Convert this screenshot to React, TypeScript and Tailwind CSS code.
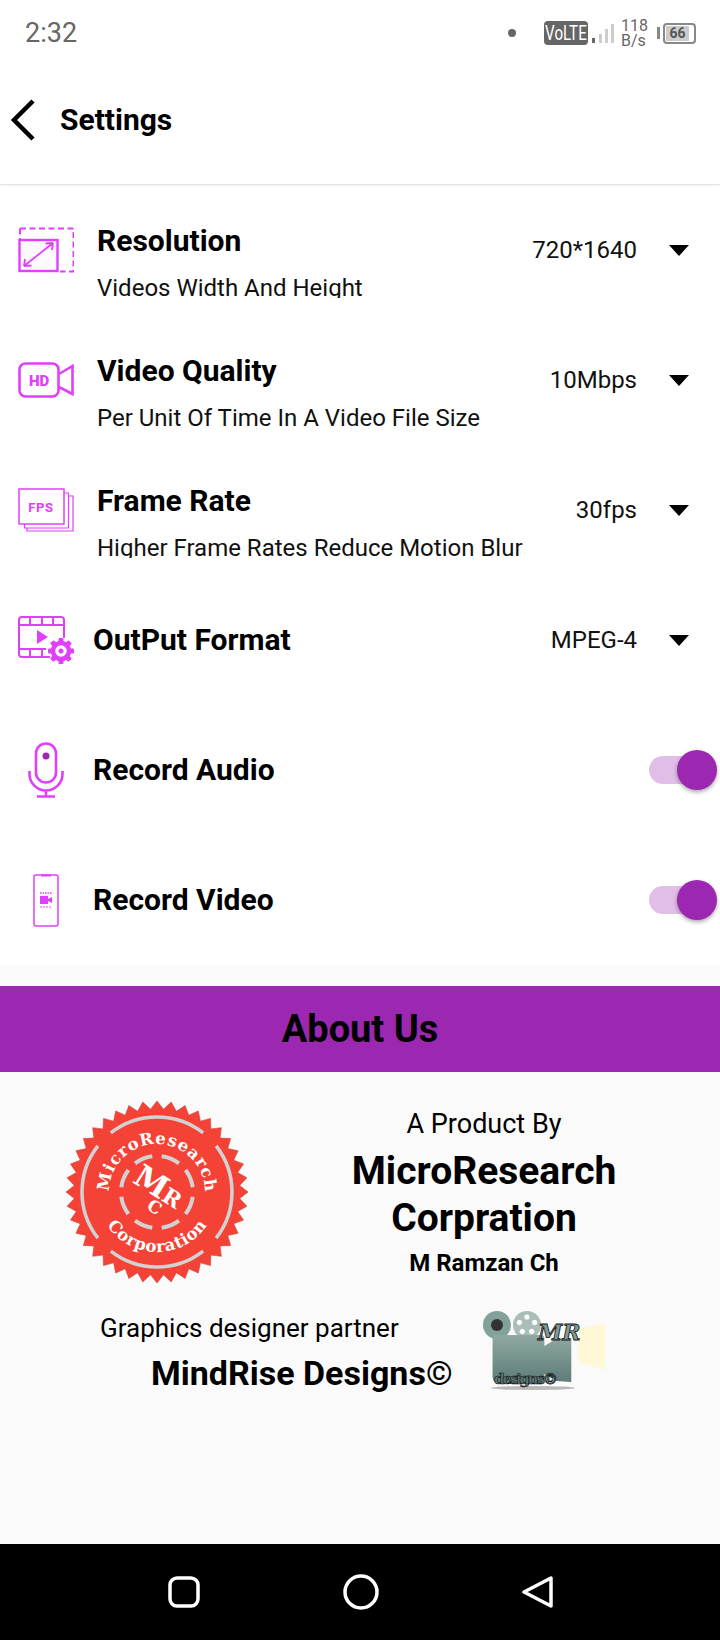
import type { ReactNode } from 'react';

const pink = '#e040fb';

function ResolutionIcon() {
  return (
    <svg width="56" height="46" viewBox="0 0 56 46" fill="none" stroke={pink} strokeWidth="2">
      <path d="M2 1.5h53.5v43H42" strokeDasharray="6 3.5" />
      <path d="M2 1.5v12" strokeDasharray="6 3.5" />
      <rect x="1.5" y="13" width="38" height="31" strokeWidth="2.4" fill="#fdfaff" />
      <path d="M6 39 35 16M6 39l1-7M6 39l7.5-.5M35 16l-7.5.5M35 16l-1 7" strokeWidth="1.8" />
    </svg>
  );
}

function HdIcon() {
  return (
    <svg width="56" height="36" viewBox="0 0 56 36" fill="none" stroke={pink} strokeWidth="2.6">
      <rect x="1.5" y="1.5" width="39" height="33" rx="6" />
      <path d="M41 12 54.5 4v28L41 25" />
      <text x="21" y="24" textAnchor="middle" fontFamily="Roboto" fontWeight="900" fontSize="15" fill={pink} stroke="none">HD</text>
    </svg>
  );
}

function FpsIcon() {
  return (
    <svg width="56" height="44" viewBox="0 0 56 44" fill="none" stroke={pink} strokeWidth="1.2">
      <path d="M46 5h4.5v35H6.500v-4" />
      <path d="M50.500 8h4.500v35H9v-3" />
      <rect x="1" y="1" width="45" height="35" strokeWidth="1.5" fill="#fff" />
      <text x="23" y="24" textAnchor="middle" fontFamily="Roboto" fontWeight="700" fontSize="13" letterSpacing="0.6" fill={pink} stroke="none">FPS</text>
    </svg>
  );
}

function FormatIcon() {
  const teeth = [0, 45, 90, 135, 180, 225, 270, 315];
  return (
    <svg width="56" height="48" viewBox="0 0 56 48" fill="none" stroke={pink} strokeWidth="2">
      <path d="M32 41H4a3 3 0 0 1-3-3V4a3 3 0 0 1 3-3h39a3 3 0 0 1 3 3v18" />
      <path d="M1 9h45M1 33h27M12 1v8M24 1v8M35 1v8M12 33v8M24 33v8" />
      <path d="M19 14l11 7-11 7z" fill={pink} stroke="none" />
      <circle cx="43" cy="35" r="8" strokeWidth="4.500" />
      <circle cx="43" cy="35" r="2.500" fill={pink} stroke="none" />
      {teeth.map(a => (
        <rect key={a} x="40.500" y="22" width="5" height="5" rx="1" fill={pink} stroke="none" transform={`rotate(${a} 43 35)`} />
      ))}
    </svg>
  );
}

function MicIcon() {
  return (
    <svg width="36" height="56" viewBox="0 0 36 56" fill="none" stroke={pink} strokeWidth="2.600">
      <rect x="8" y="1.500" width="20" height="39" rx="10" />
      <path d="M1.500 29v3a16.500 16.500 0 0 0 33 0v-3M18 48.500v6M9 54.500h18" />
      <circle cx="18" cy="14" r="3.500" fill="#9c27b0" stroke="none" />
    </svg>
  );
}

function PhoneIcon() {
  return (
    <svg width="26" height="53" viewBox="0 0 26 53" fill="none" stroke={pink} strokeWidth="1.500">
      <rect x="1" y="1" width="24" height="51" rx="2" />
      <path d="M8 1.500h10" strokeWidth="2" />
      <path d="M7 19h12" strokeWidth="1.500" strokeDasharray="1.500 1" />
      <path d="M7 22h8v8H7zM15 25l4-2v6l-4-2z" fill={pink} stroke="none" />
      <path d="M7 33h12" strokeWidth="1" strokeDasharray="2 1" />
    </svg>
  );
}

function Arrow() {
  return (
    <svg width="20" height="11" viewBox="0 0 20 11" className="ml-[32px]">
      <path d="M0 0h20L10 11z" fill="#000" />
    </svg>
  );
}

function Toggle() {
  return (
    <div className="relative ml-auto mr-[23px] h-[28px] w-[48px] rounded-full bg-[#e1bee7]">
      <div className="absolute right-[-20px] top-[-6px] h-[40px] w-[40px] rounded-full bg-[#9c27b0] shadow-[0_2px_4px_rgba(0,0,0,0.35)]" />
    </div>
  );
}

function DetailRow({ icon, title, sub, value }: { icon: ReactNode; title: string; sub: string; value: string }) {
  return (
    <div className="flex h-[130px] items-center pl-[18px] pr-[31px]">
      <div className="flex w-[56px] justify-center">{icon}</div>
      <div className="ml-[23px] h-[96px] overflow-hidden pt-[21px]">
        <div className="text-[30px] font-bold leading-[36px] text-black">{title}</div>
        <div className="mt-[14px] text-[24px] leading-[30px] text-[#111] whitespace-nowrap">{sub}</div>
      </div>
      <div className="ml-auto text-[24px] leading-[30px] text-[#111]">{value}</div>
      <Arrow />
    </div>
  );
}

function PlainRow({ icon, title, children }: { icon: ReactNode; title: string; children: ReactNode }) {
  return (
    <div className="flex h-[130px] items-center pl-[18px]">
      <div className="flex w-[56px] justify-center">{icon}</div>
      <div className="ml-[19px] text-[30px] font-bold leading-[36px] text-black">{title}</div>
      {children}
    </div>
  );
}

function Seal() {
  const n = 40;
  const pts: string[] = [];
  for (let i = 0; i < n * 2; i++) {
    const r = i % 2 === 0 ? 91 : 83;
    const a = (i * Math.PI) / n - Math.PI / 2;
    pts.push(`${(92 + r * Math.cos(a)).toFixed(1)},${(92 + r * Math.sin(a)).toFixed(1)}`);
  }
  const arc = (r: number, from: number, to: number) => {
    const p = (d: number) => {
      const a = ((d - 90) * Math.PI) / 180;
      return `${(92 + r * Math.cos(a)).toFixed(2)} ${(92 + r * Math.sin(a)).toFixed(2)}`;
    };
    return `M${p(from)}A${r} ${r} 0 0 1 ${p(to)}`;
  };
  return (
    <svg width="184" height="184" viewBox="0 0 184 184" fill="none">
      <defs>
        <path id="seal-top" d="M44 92a48 48 0 0 1 96 0" />
        <path id="seal-bottom" d="M32 92a60 60 0 0 0 120 0" />
      </defs>
      <polygon points={pts.join(' ')} fill="#f44336" stroke="#c9473c" strokeWidth="0.600" />
      {[0, 90, 180, 270].map(a => (
        <path key={a} d={arc(75, a - 38, a + 38)} stroke="#d2d2d2" strokeWidth="3.500" />
      ))}
      {[0, 45, 90, 135, 180, 225, 270, 315].map(a => (
        <path key={a} d={arc(36, a + 22.500 - 15, a + 22.500 + 15)} stroke="#d2d2d2" strokeWidth="4" />
      ))}
      <g fontFamily="DejaVu Serif" fontWeight="700" fill="#fff" fontSize="16.500">
        <text>
          <textPath href="#seal-top" startOffset="50%" textAnchor="middle" textLength="150">MicroResearch</textPath>
        </text>
        <text>
          <textPath href="#seal-bottom" startOffset="50%" textAnchor="middle" textLength="118">Corporation</textPath>
        </text>
        <g transform="rotate(32 92 92)">
          <text x="82" y="97" textAnchor="middle" fontSize="31">M</text>
          <text x="108" y="97" textAnchor="middle" fontSize="22">R</text>
          <text x="98" y="112" textAnchor="middle" fontSize="17">C</text>
        </g>
      </g>
    </svg>
  );
}

function DesignLogo() {
  return (
    <svg width="126" height="84" viewBox="0 0 126 84" fill="none">
      <defs>
        <linearGradient id="cam" x1="0" y1="0" x2="0" y2="1">
          <stop offset="0" stopColor="#8fa9a3" />
          <stop offset="1" stopColor="#5c7a76" />
        </linearGradient>
      </defs>
      <path d="M99 20 126 14v47l-27-8z" fill="#fff8d6" />
      <circle cx="18" cy="16" r="14" fill="#83a19b" />
      <circle cx="18" cy="16" r="6" fill="#333" />
      <circle cx="48" cy="16" r="14" fill="#a9bdb9" />
      {[0, 72, 144, 216, 288].map(a => (
        <circle key={a} cx="48" cy="8" r="2.600" fill="#fff" transform={`rotate(${a} 48 16)`} />
      ))}
      <path d="M11 36a4 4 0 0 1 4-4h46a4 4 0 0 1 4 4v7l12-7h16v43l-16-1-12-7v5a5 5 0 0 1-5 5H18a7 7 0 0 1-7-7z" fill="url(#cam)" transform="translate(3 -6) scale(0.96 1)" />
      <ellipse cx="54" cy="79" rx="42" ry="2" fill="#777" opacity="0.5" />
      <text x="59" y="31" fontFamily="DejaVu Serif" fontStyle="italic" fontWeight="700" fontSize="22" fill="#7f9a94" stroke="#111" strokeWidth="0.800">MR</text>
      <text x="15" y="75" fontFamily="DejaVu Serif" fontWeight="700" fontSize="15.500" fill="#5c7a76" stroke="#111" strokeWidth="0.600" textLength="64">designs©</text>
    </svg>
  );
}

export default function App() {
  return (
    <div className="flex h-[1640px] w-[720px] flex-col overflow-hidden bg-white font-[Roboto,sans-serif]">
      {/* status bar */}
      <div className="flex h-[56px] items-center pl-[25px] pr-[24px] pt-[10px] text-[#666]">
        <span className="text-[27px] leading-[32px]">2:32</span>
        <span className="ml-auto h-[8px] w-[8px] rounded-full bg-[#666]" />
        <div className="ml-[28px] flex h-[24px] w-[44px] items-center justify-center overflow-hidden rounded-[4px] bg-[#666]">
          <span className="scale-x-[0.72] text-[21px] leading-[24px] text-white">VoLTE</span>
        </div>
        <svg width="24" height="24" viewBox="0 0 24 24" className="ml-[3px]">
          <rect x="1" y="17" width="3" height="5" fill="#666" />
          <rect x="8" y="13" width="3" height="9" fill="#ccc" />
          <rect x="14" y="8" width="3" height="14" fill="#ccc" />
          <rect x="20" y="3" width="3" height="19" fill="#ccc" />
        </svg>
        <div className="ml-[6px] text-[16px] leading-[15px] text-[#666]">
          <div>118</div>
          <div>B/s</div>
        </div>
        <div className="ml-[9px] h-[12px] w-[3px] bg-[#888]" />
        <div className="ml-[3px] flex h-[21px] w-[33px] items-center rounded-[4px] border-2 border-[#888] p-[1px]">
          <div className="flex h-full w-[23px] items-center justify-center rounded-[1px] bg-[#ccc] text-[14px] font-bold leading-none text-[#555]">66</div>
        </div>
      </div>

      {/* toolbar */}
      <div className="flex h-[129px] items-center border-b border-[#e4e4e4] pl-[10px] shadow-[0_1px_2px_rgba(0,0,0,0.06)]">
        <svg width="26" height="42" viewBox="0 0 26 42" fill="none" stroke="#000" strokeWidth="4.500">
          <path d="M23 2 4 21l19 19" />
        </svg>
        <span className="ml-[24px] text-[30px] font-bold leading-[36px] text-black">Settings</span>
      </div>

      <DetailRow icon={<ResolutionIcon />} title="Resolution" sub="Videos Width And Height" value="720*1640" />
      <DetailRow icon={<HdIcon />} title="Video Quality" sub="Per Unit Of Time In A Video File Size" value="10Mbps" />
      <DetailRow icon={<FpsIcon />} title="Frame Rate" sub="Higher Frame Rates Reduce Motion Blur" value="30fps" />
      <PlainRow icon={<FormatIcon />} title="OutPut Format">
        <div className="ml-auto text-[24px] leading-[30px] text-[#111]">MPEG-4</div>
        <div className="mr-[31px]"><Arrow /></div>
      </PlainRow>
      <PlainRow icon={<MicIcon />} title="Record Audio"><Toggle /></PlainRow>
      <PlainRow icon={<PhoneIcon />} title="Record Video"><Toggle /></PlainRow>

      {/* about */}
      <div className="flex flex-1 flex-col bg-[#fafafa] pt-[21px]">
        <div className="flex h-[86px] items-center justify-center bg-[#9c27b0] text-[38px] font-bold leading-[44px] text-black">About Us</div>
        <div className="flex pl-[65px] pt-[28px]">
          <Seal />
          <div className="ml-[95px] flex w-[280px] flex-col items-center pt-[8px] text-black">
            <div className="text-[27px] leading-[32px]">A Product By</div>
            <div className="mt-[8px] text-center text-[39px] font-bold leading-[47px]">MicroResearch<br />Corpration</div>
            <div className="mt-[7px] text-[24px] font-bold leading-[29px]">M Ramzan Ch</div>
          </div>
        </div>
        <div className="flex pl-[100px] pt-[28px]">
          <div className="text-black">
            <div className="text-[26px] leading-[32px]">Graphics designer partner</div>
            <div className="ml-[51px] mt-[9px] text-[34px] font-bold leading-[40px]">MindRise Designs©</div>
          </div>
          <div className="ml-[26px] mt-[-3px]"><DesignLogo /></div>
        </div>
      </div>

      {/* nav bar */}
      <div className="flex h-[96px] items-center bg-black pl-[168px] text-white">
        <svg width="32" height="32" viewBox="0 0 32 32" fill="none" stroke="#fff" strokeWidth="3.500">
          <rect x="2" y="2" width="28" height="28" rx="7" />
        </svg>
        <svg width="36" height="36" viewBox="0 0 36 36" fill="none" stroke="#fff" strokeWidth="3.500" className="ml-[143px]">
          <circle cx="18" cy="18" r="16" />
        </svg>
        <svg width="32" height="34" viewBox="0 0 32 34" fill="none" stroke="#fff" strokeWidth="3.500" strokeLinejoin="round" className="ml-[143px]">
          <path d="M29 3v28L2 17z" />
        </svg>
      </div>
    </div>
  );
}
